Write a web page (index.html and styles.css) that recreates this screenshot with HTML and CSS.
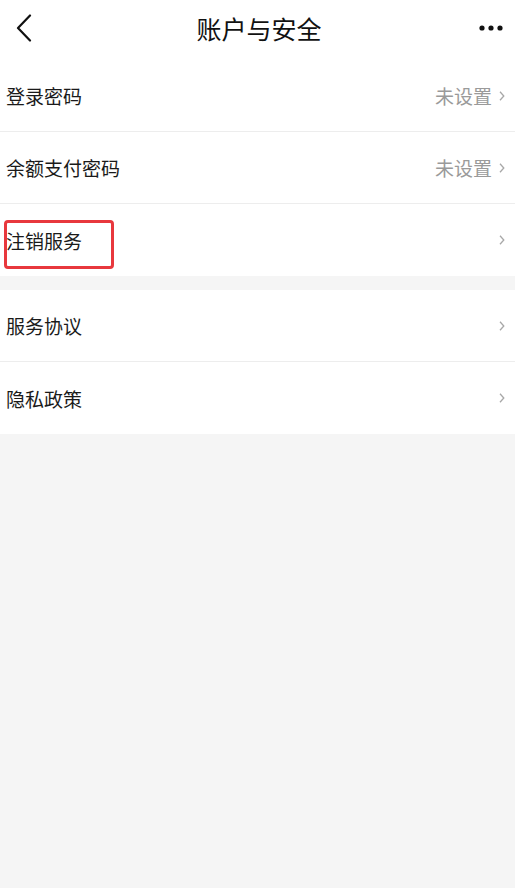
FILE: index.html
```html
<!DOCTYPE html>
<html lang="zh">
<head>
<meta charset="utf-8">
<title>账户与安全</title>
<link rel="stylesheet" href="styles.css">
</head>
<body>
<div class="page">
  <header class="nav">
    <span class="nav-back">
      <svg width="16" height="28" viewBox="0 0 16 28"><path d="M14 1.5 L2 14 L14 26.5" fill="none" stroke="#111" stroke-width="2.2" stroke-linecap="round" stroke-linejoin="round"/></svg>
    </span>
    <h1 class="nav-title">账户与安全</h1>
    <span class="nav-more">
      <svg width="26" height="6" viewBox="0 0 26 6"><circle cx="3" cy="3" r="2.6" fill="#111"/><circle cx="12" cy="3" r="2.6" fill="#111"/><circle cx="21" cy="3" r="2.6" fill="#111"/></svg>
    </span>
  </header>

  <section class="group">
    <div class="row"><span class="label">登录密码</span><span class="value">未设置</span><span class="chev"><svg width="6" height="10" viewBox="0 0 6 10"><path d="M1 0.8 L4.8 5 L1 9.2" fill="none" stroke="#a8a8a8" stroke-width="1.3"/></svg></span></div>
    <div class="row"><span class="label">余额支付密码</span><span class="value">未设置</span><span class="chev"><svg width="6" height="10" viewBox="0 0 6 10"><path d="M1 0.8 L4.8 5 L1 9.2" fill="none" stroke="#a8a8a8" stroke-width="1.3"/></svg></span></div>
    <div class="row"><span class="label">注销服务</span><span class="value"></span><span class="chev"><svg width="6" height="10" viewBox="0 0 6 10"><path d="M1 0.8 L4.8 5 L1 9.2" fill="none" stroke="#a8a8a8" stroke-width="1.3"/></svg></span><span class="mark"></span></div>
  </section>

  <section class="group">
    <div class="row"><span class="label">服务协议</span><span class="value"></span><span class="chev"><svg width="6" height="10" viewBox="0 0 6 10"><path d="M1 0.8 L4.8 5 L1 9.2" fill="none" stroke="#a8a8a8" stroke-width="1.3"/></svg></span></div>
    <div class="row"><span class="label">隐私政策</span><span class="value"></span><span class="chev"><svg width="6" height="10" viewBox="0 0 6 10"><path d="M1 0.8 L4.8 5 L1 9.2" fill="none" stroke="#a8a8a8" stroke-width="1.3"/></svg></span></div>
  </section>
</div>
</body>
</html>
```

FILE: styles.css
```css
* { box-sizing: border-box; }
html, body {
  margin: 0;
  padding: 0;
  background: #f5f5f5;
  font-family: "Noto Sans CJK SC", "Noto Sans", "Liberation Sans", sans-serif;
}
.page {
  width: 515px;
  min-height: 888px;
  background: #f5f5f5;
}
.nav {
  height: 60px;
  background: #fff;
  display: grid;
  grid-template-columns: 1fr auto 1fr;
  align-items: center;
  padding: 0 10px 4px 16px;
}
.nav-back { display: flex; }
.nav-title {
  margin: 0 0 0 -3px;
  font-size: 25px;
  font-weight: 400;
  color: #111;
  letter-spacing: 0;
  line-height: 1;
}
.nav-more { display: flex; justify-content: flex-end; }
.group {
  background: #fff;
  margin-bottom: 14px;
}
.row {
  position: relative;
  height: 72px;
  display: flex;
  align-items: center;
  padding: 0 10px 0 6px;
  border-bottom: 1.5px solid #ededed;
}
.row:last-child { border-bottom: none; }
.label {
  flex: 1;
  font-size: 19px;
  color: #1a1a1a;
}
.value {
  font-size: 19px;
  color: #9a9a9a;
  margin-right: 7px;
}
.chev { display: flex; }
.mark {
  position: absolute;
  left: 4px;
  top: 16px;
  width: 110px;
  height: 49px;
  border: 3px solid #e8383d;
  border-radius: 4px;
}
```
